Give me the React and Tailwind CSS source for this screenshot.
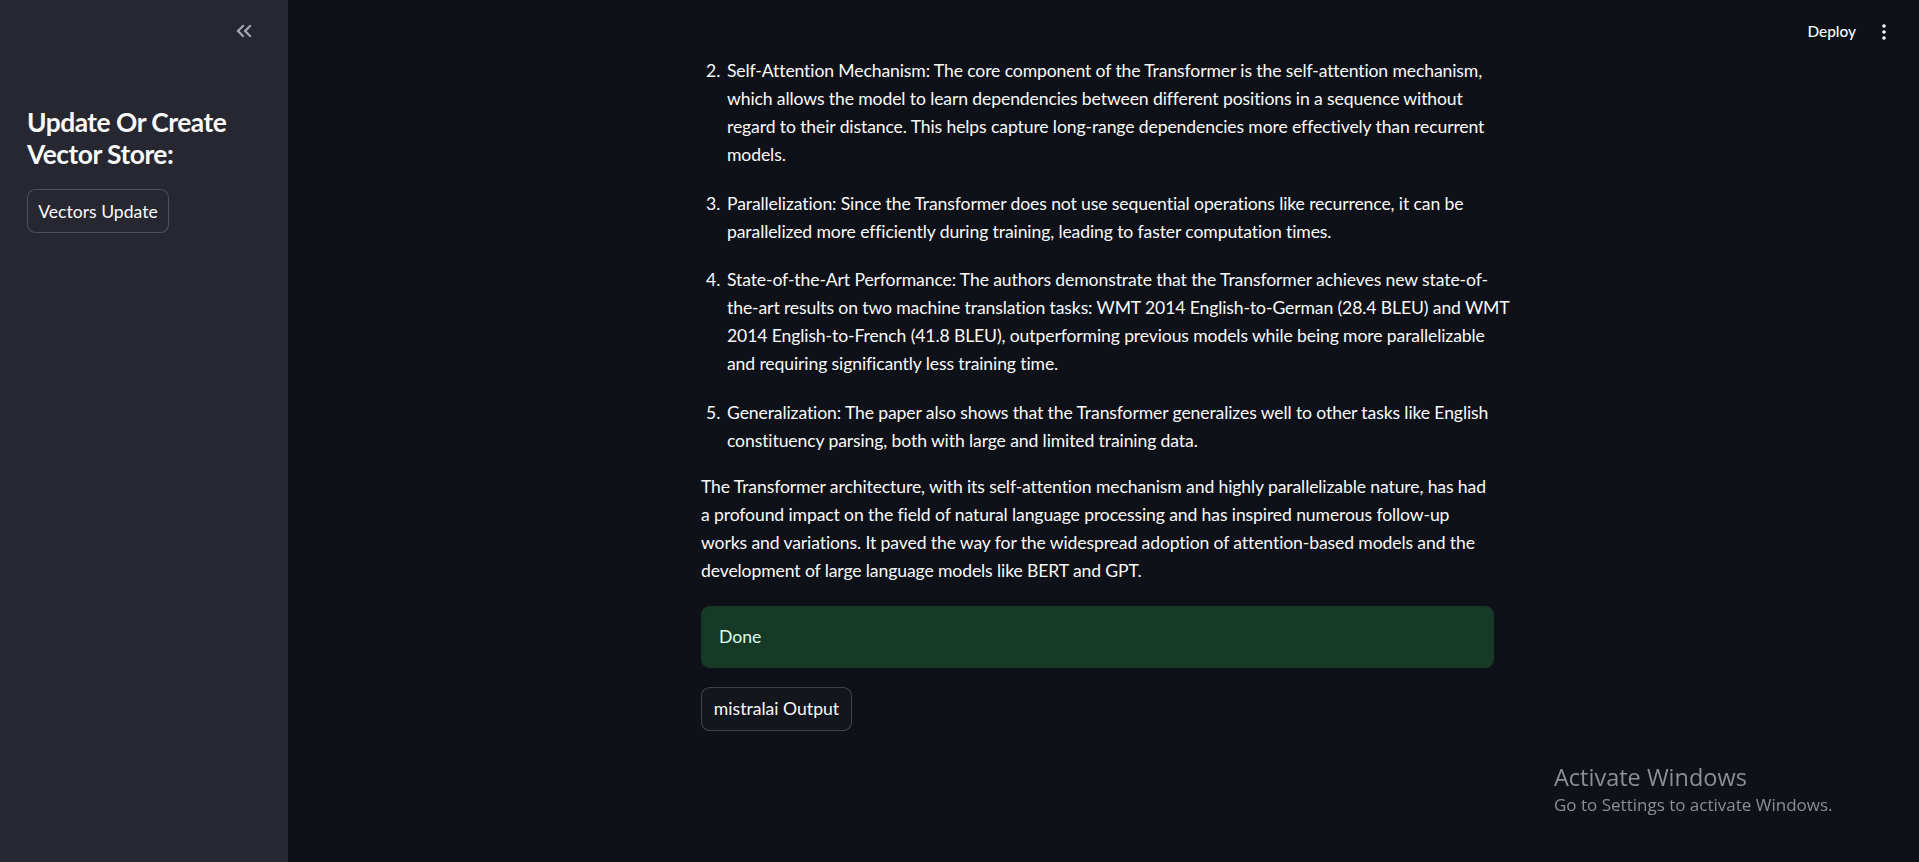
import React from "react";

const items = [
    {
        n: "2.",
        lines: [
            "Self-Attention Mechanism: The core component of the Transformer is the self-attention mechanism,",
            "which allows the model to learn dependencies between different positions in a sequence without",
            "regard to their distance. This helps capture long-range dependencies more effectively than recurrent",
            "models.",
        ],
    },
    {
        n: "3.",
        lines: [
            "Parallelization: Since the Transformer does not use sequential operations like recurrence, it can be",
            "parallelized more efficiently during training, leading to faster computation times.",
        ],
    },
    {
        n: "4.",
        lines: [
            "State-of-the-Art Performance: The authors demonstrate that the Transformer achieves new state-of-",
            "the-art results on two machine translation tasks: WMT 2014 English-to-German (28.4 BLEU) and WMT",
            "2014 English-to-French (41.8 BLEU), outperforming previous models while being more parallelizable",
            "and requiring significantly less training time.",
        ],
    },
    {
        n: "5.",
        lines: [
            "Generalization: The paper also shows that the Transformer generalizes well to other tasks like English",
            "constituency parsing, both with large and limited training data.",
        ],
    },
];

const summary = [
    "The Transformer architecture, with its self-attention mechanism and highly parallelizable nature, has had",
    "a profound impact on the field of natural language processing and has inspired numerous follow-up",
    "works and variations. It paved the way for the widespread adoption of attention-based models and the",
    "development of large language models like BERT and GPT.",
];

const Line = ({ text }) => <span className="block whitespace-nowrap">{text}</span>;

const App = () => {
    return (
        <div className="flex h-[862px] w-full overflow-hidden bg-[#0e1117] text-[#fafafa] font-['Lato',sans-serif]">
            {/* sidebar */}
            <aside className="w-[288px] shrink-0 bg-[#262730] px-[27px]">
                <div className="flex justify-end pt-[18px] pr-[31px] -mr-[27px]">
                    <svg viewBox="0 0 24 24" className="h-[26px] w-[26px] fill-[#a3a8b8]">
                        <path d="M17.59 18L19 16.59 14.42 12 19 7.41 17.59 6l-6 6z" />
                        <path d="M11 18l1.41-1.41L7.83 12l4.58-4.59L11 6l-6 6z" />
                    </svg>
                </div>
                <h2 className="mt-[63px] text-[26.4px] font-bold leading-[31.7px] tracking-[-0.5px]">
                    Update Or Create
                    <br />
                    Vector Store:
                </h2>
                <button className="mt-[19px] h-[44px] w-[142px] rounded-[8.8px] border border-[#fafafa33] bg-[#262730] text-[17.6px] leading-none">
                    Vectors Update
                </button>
            </aside>

            {/* main */}
            <main className="relative flex-1">
                <div className="absolute right-0 top-0 flex h-[64px] items-center gap-[26px] pr-[33px]">
                    <span className="text-[15.4px] font-medium">Deploy</span>
                    <svg viewBox="0 0 4 16" className="h-[16px] w-[4px] fill-[#fafafa]">
                        <circle cx="2" cy="2" r="1.8" />
                        <circle cx="2" cy="8" r="1.8" />
                        <circle cx="2" cy="14" r="1.8" />
                    </svg>
                </div>

                <div className="ml-[413px] w-[793px] pt-[57px] text-[17.6px] leading-[28.16px]">
                    <ol className="mb-[18px] flex flex-col gap-[20px]">
                        {items.map((it) => (
                            <li key={it.n} className="flex">
                                <span className="w-[26px] shrink-0 pl-[5px]">{it.n}</span>
                                <div className="tracking-[-0.12px]">
                                    {it.lines.map((l, i) => (
                                        <Line key={i} text={l} />
                                    ))}
                                </div>
                            </li>
                        ))}
                    </ol>
                    <p className="tracking-[-0.12px]">
                        {summary.map((l, i) => (
                            <Line key={i} text={l} />
                        ))}
                    </p>
                    <div className="mt-[20px] rounded-[8.8px] bg-[#173928] px-[18px] py-[17px] text-[#dffde9]">
                        Done
                    </div>
                    <button className="mt-[19px] h-[44px] w-[151px] rounded-[8.8px] border border-[#fafafa33] bg-[#13161d] leading-none">
                        mistralai Output
                    </button>
                </div>

                {/* windows watermark */}
                <div className="fixed left-[1554px] top-[761px] font-['Open_Sans',sans-serif] text-[#8b8e94]">
                    <div className="text-[23.5px] leading-[32px]">Activate Windows</div>
                    <div className="text-[17px] leading-[24px]">Go to Settings to activate Windows.</div>
                </div>
            </main>
        </div>
    );
};

export default App;
